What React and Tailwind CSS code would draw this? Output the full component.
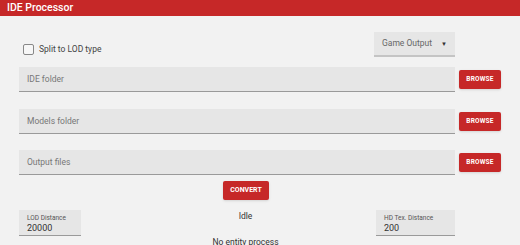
import { useState } from "react";

function PathField({ label }) {
  return (
    <div className="flex items-center">
      <div className="w-[436px] h-[25px] bg-[#e6e6e6] border-b border-[#9a9a9a] flex items-center pl-2 text-[8.5px] text-[#777]">
        {label}
      </div>
      <button className="ml-[4px] w-[42px] h-[19px] bg-[#c62828] rounded-[2px] text-white text-[6.5px] font-bold tracking-[0.2px] shadow-sm">
        BROWSE
      </button>
    </div>
  );
}

function NumberField({ label, value, width }) {
  return (
    <div
      className={`${width} h-[26px] bg-[#e6e6e6] border-b border-[#9a9a9a] pl-2 pt-[4px] flex flex-col`}
    >
      <span className="text-[6.5px] leading-[8px] text-[#555]">{label}</span>
      <span className="text-[9px] leading-[12px] text-[#333]">{value}</span>
    </div>
  );
}

export default function App() {
  const [split, setSplit] = useState(false);

  return (
    <div className="w-[520px] h-[245px] overflow-hidden bg-[#f2f2f2] font-['Roboto',sans-serif]">
      <div className="h-4 bg-[#c62828] pl-[7px] text-white text-[10.5px] font-medium leading-4">
        IDE Processor
      </div>

      <div className="pl-[19px] pt-4">
        <div className="flex items-center h-[25px] w-[436px]">
          <label className="flex items-center ml-1 mt-[10px] gap-[5px] text-[8.5px] text-[#444]">
            <input
              type="checkbox"
              checked={split}
              onChange={(e) => setSplit(e.target.checked)}
              className="appearance-none w-[11px] h-[11px] border border-[#888] rounded-[2px] bg-[#f7f7f7]"
            />
            Split to LOD type
          </label>
          <div className="ml-auto w-[81px] h-[25px] bg-[#e6e6e6] border-b-2 border-[#c4c4c4] flex items-center pl-2 pr-2 text-[8.5px] text-[#666]">
            Game Output
            <span className="ml-auto text-[6px] text-[#333]">▼</span>
          </div>
        </div>

        <div className="mt-[10px]">
          <PathField label="IDE folder" />
        </div>
        <div className="mt-[17px]">
          <PathField label="Models folder" />
        </div>
        <div className="mt-[16px]">
          <PathField label="Output files" />
        </div>

        <div className="flex mt-[6px] pl-[204px]">
          <button className="w-[46px] h-[19px] bg-[#c62828] rounded-[2px] text-white text-[7px] font-bold shadow-sm">
            CONVERT
          </button>
        </div>

        <div className="flex mt-[10px] w-[436px]">
          <NumberField label="LOD Distance" value="20000" width="w-[62px]" />
          <div className="flex-1 flex flex-col items-center pl-[34px] text-[8.5px] leading-[11px] text-[#333]">
            <span className="mt-[1px]">Idle</span>
            <span className="mt-[15px]">No entity process</span>
          </div>
          <NumberField label="HD Tex. Distance" value="200" width="w-[79px]" />
        </div>
      </div>
    </div>
  );
}
